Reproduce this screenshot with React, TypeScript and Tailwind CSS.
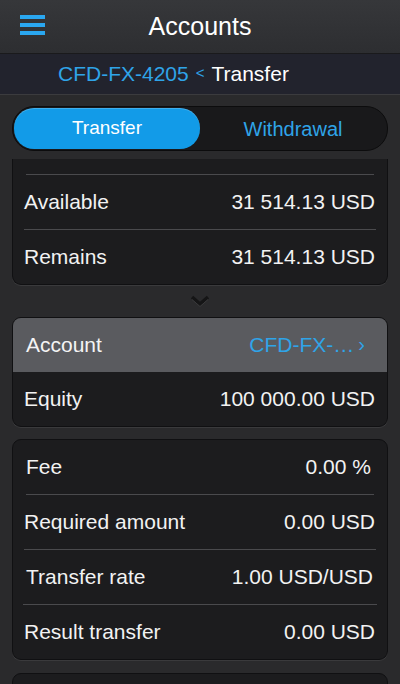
const font = { fontFamily: '"Liberation Sans", Arial, sans-serif' }

function Row({ label, value, last }: { label: string; value: string; last?: boolean }) {
  return (
    <>
      <div className="flex items-center justify-between h-[54px] pl-[11px] pr-[12px] text-[21px] text-[#f2f2f2]">
        <span>{label}</span>
        <span>{value}</span>
      </div>
      {!last && <div className="mx-[11px] h-px bg-[#4a4a4d]" />}
    </>
  )
}

function Card({ children }: { children: React.ReactNode }) {
  return (
    <div className="mx-[12px] rounded-[9px] bg-[#1c1c1e] border border-[#101012] shadow-[0_1px_0_rgba(255,255,255,0.08)] overflow-hidden">
      {children}
    </div>
  )
}

export default function App() {
  return (
    <div className="w-[400px] h-[684px] overflow-hidden bg-[#2a2a2c] flex flex-col" style={font}>
      {/* header */}
      <div className="relative h-[54px] flex items-center justify-center bg-gradient-to-b from-[#36373a] to-[#2d2e31] border-b border-[#1a1a1c]">
        <div className="absolute left-[20px] top-[15px] flex flex-col gap-[4px]">
          <div className="w-[25px] h-[4px] bg-[#2aa7f0]" />
          <div className="w-[25px] h-[4px] bg-[#2aa7f0]" />
          <div className="w-[25px] h-[4px] bg-[#2aa7f0]" />
        </div>
        <span className="text-[25px] text-white">Accounts</span>
      </div>

      {/* breadcrumb */}
      <div className="h-[41px] flex items-center pl-[58px] bg-[#22232d] border-b border-[#3b3b3e] text-[21px]">
        <span className="text-[#2fa4e8]">CFD-FX-4205</span>
        <span className="text-[#2fa4e8] text-[15px] mx-[7px] mb-[2px]">&lt;</span>
        <span className="text-white">Transfer</span>
      </div>

      {/* segmented */}
      <div className="pt-[11px] pb-[8px] px-[12px]">
        <div className="flex h-[45px] rounded-[22px] bg-[#19191b] border border-[#0c0c0d] p-[1px]">
          <div className="flex-1 rounded-[20px] bg-[#129be8] flex items-center justify-center text-[19px] text-white shadow-[inset_0_1px_0_rgba(255,255,255,0.2)]">
            Transfer
          </div>
          <div className="flex-1 flex items-center justify-center text-[20px] text-[#2fa4e8]">
            Withdrawal
          </div>
        </div>
      </div>

      {/* scroll area */}
      <div className="flex-1 overflow-hidden">
        <div className="mx-[12px] rounded-b-[9px] bg-[#1c1c1e] border border-t-0 border-[#101012] shadow-[0_1px_0_rgba(255,255,255,0.08)] overflow-hidden">
          <div className="h-[15px]" />
          <div className="mx-[13px] h-px bg-[#4a4a4d]" />
          <Row label="Available" value="31 514.13 USD" />
          <Row label="Remains" value="31 514.13 USD" last />
        </div>

        <div className="h-[32px] flex items-center justify-center">
          <svg width="18" height="12" viewBox="0 0 18 12">
            <path d="M1 2 L9 9 L17 2" fill="none" stroke="#151516" strokeWidth="3.5" />
            <path d="M1 4.5 L9 11.5 L17 4.5" fill="none" stroke="#3a3a3c" strokeWidth="1" />
          </svg>
        </div>

        <Card>
          <div className="flex items-center justify-between h-[54px] pl-[13px] pr-[22px] bg-[#5a5b5f] text-[21px]">
            <span className="text-[#f4f4f4]">Account</span>
            <span className="text-[#2fa4e8] flex items-center">
              CFD-FX-…
              <span className="ml-[4px] text-[20px] leading-none mb-[2px]">›</span>
            </span>
          </div>
          <Row label="Equity" value="100 000.00 USD" last />
        </Card>

        <div className="h-[12px]" />

        <Card>
          <div className="flex items-center justify-between h-[54px] pl-[13px] pr-[16px] text-[21px] text-[#f2f2f2]">
            <span>Fee</span>
            <span>0.00 %</span>
          </div>
          <div className="mx-[13px] h-px bg-[#4a4a4d]" />
          <Row label="Required amount" value="0.00 USD" />
          <div className="flex items-center justify-between h-[54px] pl-[13px] pr-[14px] text-[21px] text-[#f2f2f2]">
            <span>Transfer rate</span>
            <span>1.00 USD/USD</span>
          </div>
          <div className="mx-[10px] h-px bg-[#4a4a4d]" />
          <Row label="Result transfer" value="0.00 USD" last />
        </Card>

        <div className="h-[13px]" />

        <Card>
          <div className="h-[54px]" />
        </Card>
      </div>
    </div>
  )
}
